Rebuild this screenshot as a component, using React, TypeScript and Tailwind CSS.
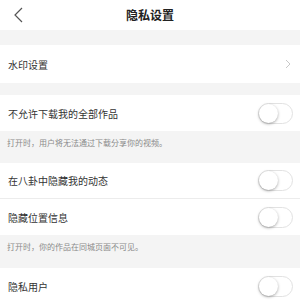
import React from 'react';

const font = { fontFamily: '"Noto Sans CJK SC", "Noto Sans", sans-serif' };

function Toggle() {
  return (
    <div className="relative h-[21px] w-[35px] rounded-full border border-[#e2e2e2] bg-white">
      <div className="absolute left-0 top-0 h-[19px] w-[19px] rounded-full bg-white shadow-[0_1px_3px_rgba(0,0,0,0.35)]" />
    </div>
  );
}

function ToggleRow({ label, border }: { label: string; border?: boolean }) {
  return (
    <div
      className={`flex h-[36px] items-center justify-between bg-white pl-[8px] pr-[7px] ${
        border ? 'border-b border-[#ececec]' : ''
      }`}
    >
      <span className="text-[10px] text-[#333]">{label}</span>
      <Toggle />
    </div>
  );
}

function Note({ text, h }: { text: string; h: string }) {
  return (
    <div className={`bg-[#f4f4f4] pl-[7px] pt-[6px] ${h}`}>
      <span className="block text-[8px] leading-[12px] text-[#8a8a8a]">{text}</span>
    </div>
  );
}

export default function App() {
  return (
    <div className="h-[300px] w-[300px] overflow-hidden bg-white" style={font}>
      <div className="relative flex h-[30px] items-center justify-center">
        <svg className="absolute left-[13px] top-[7px]" width="11" height="16" viewBox="0 0 11 16">
          <path d="M9 1 L2 8 L9 15" fill="none" stroke="#555" strokeWidth="1.2" />
        </svg>
        <span className="text-[12px] font-semibold text-[#222]">隐私设置</span>
      </div>
      <div className="h-[15px] bg-[#f4f4f4]" />
      <div className="flex h-[38px] items-center justify-between bg-white pl-[8px] pr-[9px]">
        <span className="text-[10px] text-[#333]">水印设置</span>
        <svg width="6" height="10" viewBox="0 0 6 10">
          <path d="M1 1 L5 5 L1 9" fill="none" stroke="#c8c8c8" strokeWidth="1" />
        </svg>
      </div>
      <div className="h-[12px] bg-[#f4f4f4]" />
      <ToggleRow label="不允许下载我的全部作品" />
      <Note text="打开时，用户将无法通过下载分享你的视频。" h="h-[32px]" />
      <ToggleRow label="在八卦中隐藏我的动态" border />
      <ToggleRow label="隐藏位置信息" />
      <Note text="打开时，你的作品在同城页面不可见。" h="h-[33px]" />
      <ToggleRow label="隐私用户" />
    </div>
  );
}
